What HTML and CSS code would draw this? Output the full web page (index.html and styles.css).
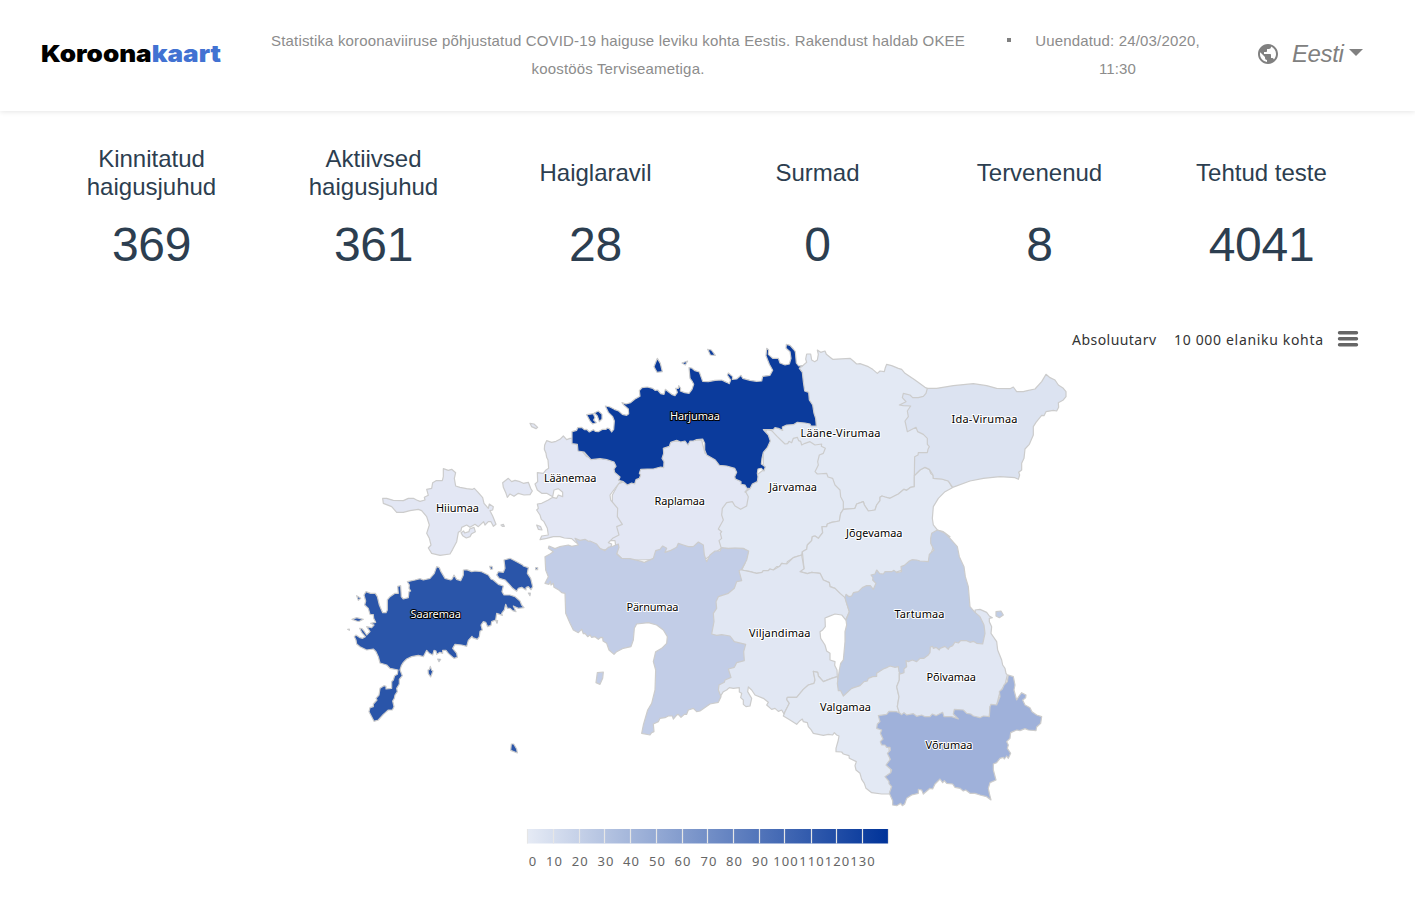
FILE: index.html
```html
<!DOCTYPE html>
<html lang="et">
<head>
<meta charset="utf-8">
<title>Koroonakaart</title>
<link rel="stylesheet" href="styles.css">
</head>
<body>
<header class="header">
  <h1 class="logo"><span class="logo-dark">Koroona</span><span class="logo-blue">kaart</span></h1>
  <p class="intro"><span class="intro-first">Statistika koroonaviiruse põhjustatud COVID-19 haiguse leviku kohta Eestis. Rakendust haldab OKEE</span><br>koostöös Terviseametiga.</p>
  <span class="bullet"></span>
  <p class="updated">Uuendatud: 24/03/2020,<br>11:30</p>
  <div class="language">
    <svg class="globe" viewBox="0 0 24 24"><path d="M12 2C6.48 2 2 6.48 2 12s4.480 10 10 10 10-4.480 10-10S17.520 2 12 2zm-1 17.930c-3.950-.49-7-3.850-7-7.930 0-.62.08-1.210.21-1.790L9 15v1c0 1.100.9 2 2 2v1.930zm6.900-2.540c-.26-.81-1-1.390-1.900-1.390h-1v-3c0-.55-.45-1-1-1H8v-2h2c.55 0 1-.45 1-1V7h2c1.100 0 2-.9 2-2v-.41c2.930 1.190 5 4.060 5 7.410 0 2.080-.8 3.970-2.100 5.390z"/></svg>
    <span class="language-name">Eesti</span>
    <span class="caret"></span>
  </div>
</header>

<section class="stats">
  <div class="stat"><div class="stat-title">Kinnitatud haigusjuhud</div><div class="stat-value">369</div></div>
  <div class="stat"><div class="stat-title">Aktiivsed haigusjuhud</div><div class="stat-value">361</div></div>
  <div class="stat"><div class="stat-title">Haiglaravil</div><div class="stat-value">28</div></div>
  <div class="stat"><div class="stat-title">Surmad</div><div class="stat-value">0</div></div>
  <div class="stat"><div class="stat-title">Tervenenud</div><div class="stat-value">8</div></div>
  <div class="stat"><div class="stat-title">Tehtud teste</div><div class="stat-value">4041</div></div>
</section>

<svg class="chart" viewBox="0 320 1415 581" width="1415" height="581">
  <defs>
    <linearGradient id="scale"><stop offset="0" stop-color="#e6ebf5"/><stop offset="1" stop-color="#003399"/></linearGradient>
  </defs>

  <g class="menu">
    <text x="1072" y="345" textLength="84">Absoluutarv</text>
    <text x="1174" y="345" textLength="149">10 000 elaniku kohta</text>
    <path class="burger" d="M1339.500 332.800H1356.500M1339.500 338.800H1356.500M1339.500 344.800H1356.500"/>
  </g>

  <g class="map">
    <!-- Raplamaa -->
    <g transform="translate(535 470) scale(.33333)">
      <path fill="#e3e7f4" d="M250 42L300 20 360-60 400-85 500-90 510-50 600-5 630 30 640 55 630 66 660 80 660 120 600 140 590 230 559 235 515 265 300 270 260 265 245 250 240 212 222 212 240 190 245 130 232 100 232 75Z"/>
    </g>
    <!-- Läänemaa, Hiiumaa -->
    <g transform="translate(370 410) scale(.33333)" fill="#e3e7f4">
      <path d="M605 85L600 85 590 89 580 78 570 88 558 94 545 97 530 92 524 105 523 118 528 130 530 142 534 150 536 175 528 180 520 190 502 188 503 215 495 222 502 240 515 250 530 250 548 260 552 240 565 236 578 247 578 260 565 255 560 265 548 262 535 270 515 280 502 282 505 295 500 300 510 315 514 328 522 335 532 355 535 375 515 378 510 389 530 385 550 380 570 380 583 384 605 386 615 395 625 402 700 420 722 415 725 402 715 398 728 385 747 375 740 350 757 343 742 320 743 295 722 270 720 255 745 222 780 190 730 150 650 140Z"/>
      <path d="M500 345L512 350 516 360 505 358Z"/>
      <path d="M415 205L425 215 435 211 450 215 460 220 475 217 482 235 487 243 480 254 462 255 445 250 432 259 420 252 412 262 408 250 400 232 398 218Z"/>
      <path d="M480 40L492 42 503 52 498 56 485 50ZM393 345L400 343 403 349 397 349Z"/>
      <path d="M38 265L50 265 70 271 100 272 115 265 130 265 140 270 150 274 165 270 163 262 175 256 170 238 185 235 188 218 198 212 217 212 220 200 220 176 235 181 245 178 257 188 253 205 257 228 270 232 290 236 308 238 313 235 325 248 338 263 342 280 355 295 358 282 370 290 368 300 360 302 368 318 378 343 370 349 363 335 355 335 345 345 341 335 325 350 315 343 300 352 290 345 275 352 273 362 265 367 260 395 248 418 240 432 210 436 185 430 175 414 183 405 178 385 170 370 178 345 170 320 155 302 145 298 120 302 100 307 80 307 65 290 40 280Z"/>
      <path d="M273 368L281 363 284 369 297 365 299 357 312 352 316 365 305 371 300 380 289 384 278 377Z"/>
    </g>
    <!-- Lääne-Virumaa -->
    <g transform="translate(790 335) scale(.33333)">
      <path fill="#e3e9f4" d="M38 92L50 82 47 72 50 57 62 57 65 75 74 80 82 75 85 58 82 45 92 52 105 48 109 58 122 68 128 73 180 70 190 78 200 87 210 86 235 95 248 103 262 115 270 108 283 110 286 98 290 88 305 92 325 100 335 103 345 115 375 135 405 157 412 160 425 175 440 200 440 350 400 390 373 425 373 455 362 457 350 466 342 463 325 477 300 490 285 486 276 483 270 487 270 497 260 510 255 525 235 528 223 510 220 500 200 507 195 520 160 523 130 520 50 450 60 340 0 340-40 330-60 300-75 283-30 240 20 240 20 100Z"/>
    </g>
    <!-- Järvamaa, Jõgevamaa -->
    <g transform="translate(700 420) scale(.33333)" fill="#e3e9f4">
      <path d="M64 385L57 362 65 355 61 340 65 335 55 327 70 300 65 285 67 265 80 248 97 245 105 258 122 268 140 258 145 230 137 215 148 207 150 180 190 150 190 60 200 28 215 32 232 50 255 72 263 71 267 64 275 68 280 55 292 52 296 62 302 64 305 75 315 70 330 65 345 75 365 72 364 79 376 85 370 100 358 105 353 125 355 135 345 155 352 162 380 160 384 171 398 175 405 195 420 210 422 230 430 245 430 268 422 280 418 303 395 307 382 312 380 320 366 320 368 338 355 355 345 348 337 350 335 362 322 375 320 388 307 395 305 405 280 413 262 425 260 432 245 430 239 439 230 440 220 450 210 447 205 452 190 452 186 457 170 460 150 455 125 450 135 430 145 395 130 385Z"/>
      <path d="M757 203L735 215 715 235 700 260 697 295 700 315 712 330 730 335 750 350 700 380 685 425 650 435 550 470 520 520 435 535 420 520 405 505 390 500 388 488 370 480 360 460 335 457 322 461 300 455 302 450 312 446 308 405 307 395 320 388 322 375 335 362 337 350 345 348 355 355 368 338 366 320 380 320 382 312 395 307 418 303 422 280 430 268 465 265 470 252 490 245 493 255 505 273 525 270 530 255 540 242 540 232 546 228 555 231 570 235 595 222 612 208 620 211 632 202 643 200 643 167 660 150 675 142 688 148 692 160 700 167 700 175 725 177 745 183Z"/>
    </g>
    <!-- Ida-Virumaa -->
    <g transform="translate(790 335) scale(.33333)">
      <path fill="#dce3f1" d="M412 160L440 160 490 152 550 146 590 152 620 160 660 161 670 156 680 170 700 170 712 167 735 162 755 140 768 118 780 128 795 135 805 150 820 160 828 170 828 185 820 195 805 203 806 217 800 228 790 226 768 230 762 242 755 241 738 262 730 275 730 300 718 328 705 342 702 370 695 385 695 405 686 412 689 420 685 433 675 428 630 425 580 430 540 438 488 457 475 438 455 432 430 430 429 420 418 403 405 397 390 405 373 422 374 365 384 360 385 353 412 353 414 343 418 335 412 328 412 310 400 298 383 290 378 277 352 290 345 258 355 245 352 228 362 213 340 212 328 210 348 200 337 188 340 175 360 180 368 188 385 188 400 184 408 175Z"/>
    </g>
    <g transform="translate(700 570) scale(.33333)">
      <!-- Viljandimaa -->
      <path fill="#e1e7f3" d="M125 0L150 5 170 10 186 7 190 2 205 2 210-3 220 0 239-11 245-20 260-18 280-37 305-45 312-4 300 5 322 11 335 7 360 10 370 30 388 38 390 50 405 55 420 70 435 83 440 100 448 125 437 150 425 135 405 132 385 140 375 144 376 170 368 180 360 185 362 205 375 225 380 243 390 250 390 270 405 275 404 286 411 300 412 320 395 325 370 335 355 318 353 307 340 304 345 330 342 340 325 345 310 358 290 382 262 382 260 388 268 400 255 425 252 432 245 420 235 424 225 415 215 418 200 405 205 397 190 385 165 375 155 360 145 351 143 365 155 385 150 408 138 410 130 403 130 390 122 383 125 370 118 366 118 353 100 355 88 353 80 360 70 365 62 378 40 340 60 270 90 240 20 200 20 90 90 20 120-20Z"/>
      <!-- Valgamaa -->
      <path fill="#e3e9f4" d="M250 438L255 425 268 400 260 388 262 382 290 382 310 358 325 345 342 340 345 330 340 304 353 307 355 318 370 335 395 325 412 320 418 350 430 370 480 340 530 305 570 280 575 262 610 262 608 300 598 310 598 330 590 350 597 380 592 410 598 425 580 450 560 480 570 560 575 650 568 672 545 672 515 668 498 655 493 640 485 628 480 610 468 600 465 587 469 575 448 565 447 557 430 552 425 546 408 545 408 535 415 510 417 498 410 495 403 488 398 495 385 493 370 496 340 490 333 479 325 470 322 458 310 455 307 447 300 452 290 463 270 450Z"/>
      <!-- Põlvamaa -->
      <path fill="#e1e7f3" d="M825 120L840 118 860 127 868 138 877 143 868 145 868 155 875 170 873 190 890 215 893 240 905 270 908 285 915 295 918 310 922 315 915 345 900 365 890 405 870 410 868 440 800 450 700 450 600 435 592 410 597 380 590 350 598 330 598 310 608 290 620 262 700 220 840 200 830 150Z"/>
      <!-- Tartumaa -->
      <path fill="#c0cde6" d="M712-120L725-115 735-110 750-95 772-70 778-40 792-10 796 20 805 50 810 110 825 127 840 140 852 165 855 190 848 222 830 220 820 214 810 217 800 212 782 212 775 219 765 216 758 227 748 232 745 238 735 229 720 235 718 240 708 232 700 235 698 229 691 231 690 248 685 255 672 265 660 265 650 275 637 270 625 275 618 272 620 290 612 296 612 308 601 312 597 305 595 290 585 292 570 288 562 292 550 297 530 310 530 319 518 320 505 325 502 333 492 335 480 347 455 355 430 378 422 362 415 362 412 340 418 300 422 280 430 270 435 215 435 185 440 165 438 150 448 125 440 100 435 83 438 73 447 80 455 78 460 68 475 65 487 53 500 47 511 47 520 58 528 40 518 30 519 23 513 15 525 12 530 0 539 11 550 12 555 5 575 5 582 1 590 8 605 5 603-10 613-14 628-27 636-31 650-30 660-27 685-25 688-47 702-60 692-80 692-95 695-110Z"/>
      <path fill="#c0cde6" d="M888 125L903 123 910 135 898 143 888 138Z"/>
      <!-- Võrumaa -->
      <path fill="#9fb1da" d="M535 437L560 433 567 424 590 425 600 430 605 434 612 428 620 435 640 431 650 439 665 435 675 440 690 440 697 432 708 437 728 427 732 440 755 440 775 447 760 432 763 418 790 420 800 430 812 432 820 438 840 443 850 438 868 440 870 410 873 403 890 405 900 380 898 365 907 357 912 345 922 335 925 315 940 320 945 345 942 360 950 390 956 380 965 368 978 375 977 383 968 390 975 405 990 413 996 425 1010 435 1025 440 1022 460 1010 471 1008 482 985 480 975 476 960 482 950 480 932 488 930 505 920 515 925 525 922 535 932 550 925 565 920 558 913 567 910 562 900 565 890 578 880 582 880 600 888 630 870 638 865 655 868 670 873 690 860 680 840 675 825 670 810 670 797 660 790 663 780 655 765 652 758 642 740 640 733 632 728 638 720 627 705 642 698 657 690 655 670 672 665 660 655 658 655 670 635 675 620 685 614 702 607 707 602 700 590 707 578 705 578 692 568 670 575 650 567 641 567 634 555 620 572 608 575 600 558 585 571 568 562 550 571 541 570 532 560 532 555 525 545 525 541 515 549 507 541 490 545 480 530 475 532 462 540 455Z"/>
    </g>
    <!-- Pärnumaa -->
    <g transform="translate(535 470) scale(.33333)" fill="#c2cde7">
      <path d="M30 260L45 252 55 245 40 235 42 228 60 236 75 230 100 225 110 229 130 225 125 215 120 205 135 211 150 208 160 214 165 213 185 222 195 235 210 242 220 232 235 228 250 222 252 232 245 252 260 265 285 266 310 272 328 277 355 265 362 242 375 238 383 228 395 235 390 247 405 242 425 232 430 220 445 225 460 230 475 230 490 216 505 225 508 255 515 275 525 255 540 243 555 243 560 233 580 236 600 234 625 236 641 243 635 270 620 298 612 302 620 332 605 335 598 355 580 370 550 380 543 395 545 415 535 430 537 455 530 492 545 496 560 494 585 498 598 515 632 523 626 545 628 572 605 578 598 592 580 597 588 622 570 630 568 637 552 645 550 660 558 680 550 697 525 702 495 723 485 725 475 715 460 720 455 733 448 733 438 742 430 733 425 735 415 747 412 738 400 738 390 743 375 745 370 755 355 762 357 785 350 788 345 795 320 790 325 765 338 720 350 700 360 660 362 600 355 575 362 545 380 535 395 520 397 500 385 480 365 465 340 458 305 462 298 475 295 510 288 530 265 535 245 545 237 553 222 540 215 520 204 513 203 503 197 502 190 508 180 500 170 502 165 495 158 500 150 490 145 491 140 478 130 488 115 480 105 460 92 430 90 370 80 368 70 359 57 352 55 340 48 345 46 334 42 343 30 340 40 320 32 300Z"/>
      <path d="M187 608L205 606 203 625 195 643 183 638Z"/>
    </g>
    <!-- Harjumaa -->
    <g transform="translate(560 335) scale(.33333)" fill="#0b3b9c">
      <path d="M36 290L50 286 53 278 65 277 73 284 80 283 88 291 100 284 106 289 115 290 128 283 138 283 142 279 148 281 155 291 161 283 163 258 158 245 145 232 136 213 150 216 163 223 176 228 187 238 200 241 206 236 205 222 192 211 186 203 198 207 212 203 225 192 240 184 238 167 246 158 262 156 278 160 285 166 293 165 302 176 312 178 316 163 325 170 335 178 345 182 352 172 347 160 355 160 356 152 362 160 361 168 374 173 387 175 396 163 401 148 396 138 390 130 387 98 395 99 405 107 418 111 424 128 428 139 445 140 465 136 485 135 500 142 508 146 512 135 502 120 505 114 518 125 517 133 530 132 543 121 548 130 570 136 590 139 605 138 608 124 630 121 638 106 628 88 618 62 620 40 626 45 625 58 638 70 655 70 660 84 675 90 688 87 693 70 690 50 678 40 679 28 690 31 700 42 706 50 709 84 716 93 728 92 718 100 727 112 730 140 734 168 746 172 748 195 758 210 762 235 767 250 769 273 753 273 750 267 735 264 712 262 700 269 680 270 667 276 668 286 655 280 645 278 640 284 618 284 610 284 625 300 631 318 622 338 610 352 606 370 604 387 616 395 612 408 604 400 594 402 592 415 594 425 592 440 577 447 570 461 560 459 555 450 543 448 543 440 526 432 524 425 530 412 524 400 500 393 478 391 466 375 440 360 434 345 434 325 428 312 410 314 400 318 390 318 384 330 375 318 362 321 350 316 332 322 328 334 310 340 311 355 306 370 312 380 311 398 302 396 280 402 262 402 242 403 238 415 242 420 238 430 228 434 224 447 215 444 202 450 190 440 176 436 180 426 164 412 162 402 168 394 162 381 140 374 120 371 93 374 80 360 72 351 54 348 52 328 36 326Z"/>
      <path d="M292 70L301 85 307 110 291 112 282 95ZM366 84L383 78 376 90ZM443 43L454 45 466 61 451 60ZM80 239L100 236 105 248 101 255 109 263 98 267 90 258ZM103 234L115 228 126 238 126 252 118 260 112 243Z"/>
    </g>
    <!-- Saaremaa -->
    <g transform="translate(340 545) scale(.33333)" fill="#2a55a9">
      <path d="M172 388L174 375 150 370 140 360 120 354 115 335 108 320 100 312 80 315 60 305 50 297 48 285 43 275 48 270 60 278 68 280 76 275 65 262 59 250 66 251 72 258 80 270 90 260 80 245 95 248 102 240 92 235 107 232 101 220 100 209 90 208 85 190 74 180 77 168 72 150 78 140 92 145 106 145 112 155 118 180 128 203 138 203 142 195 142 165 150 155 165 145 175 145 173 124 182 122 184 155 190 162 205 158 207 140 212 138 207 130 208 120 202 110 225 105 240 101 250 105 270 100 283 85 290 65 298 68 303 80 315 100 332 105 337 101 342 90 350 103 362 107 370 90 370 75 380 74 395 80 405 78 425 80 445 90 453 102 460 105 475 118 490 123 486 140 492 150 510 150 525 155 540 168 545 180 552 188 535 190 520 183 528 200 518 197 510 190 502 190 497 178 493 195 485 205 487 211 470 205 467 225 455 230 453 241 443 245 437 232 430 230 423 240 427 255 420 259 418 275 412 283 398 278 396 274 385 286 380 304 365 300 345 298 338 310 350 325 352 337 342 340 325 325 318 316 308 316 308 325 300 322 290 328 288 318 282 316 278 330 268 325 260 316 250 335 235 331 215 335 200 342 190 352 184 362 180 375 187 392 178 403 178 417 170 430 172 440 165 450 163 460 158 468 162 485 157 495 145 495 130 508 115 525 102 529 95 515 87 500 90 488 100 485 100 477 111 465 108 460 117 450 120 430 132 422 138 424 138 432 155 430 155 410 160 405 164 392Z"/>
      <path d="M492 45L510 40 530 50 548 60 550 63 565 68 562 85 572 100 578 125 573 134 565 125 558 128 558 135 545 127 535 130 530 139 518 130 505 115 495 105 478 100 470 90 475 80 490 82 495 70Z"/>
      <path d="M449 64L456 64 458 72 452 73ZM587 68L593 68 593 74 587 74ZM565 144L571 144 570 152ZM467 226L473 227 471 235ZM50 152L62 160 55 166ZM36 223L50 218 70 223 58 229 50 228ZM23 253L28 252 28 256ZM271 364L275 376 279 378 272 396 265 386 264 375 268 374ZM293 342L302 343 297 350ZM514 597L521 597 530 612 532 624 512 616Z"/>
    </g>
  </g>

  <g class="labels">
    <text class="light" x="670" y="420" textLength="50">Harjumaa</text>
    <text x="800.500" y="437" textLength="80">Lääne-Virumaa</text>
    <text x="951.500" y="423" textLength="66">Ida-Virumaa</text>
    <text x="544" y="482" textLength="52.500">Läänemaa</text>
    <text x="436" y="512" textLength="43">Hiiumaa</text>
    <text x="654.500" y="505" textLength="50.500">Raplamaa</text>
    <text x="769" y="491" textLength="48">Järvamaa</text>
    <text x="846" y="537" textLength="56.500">Jõgevamaa</text>
    <text class="light" x="410.500" y="618" textLength="50.500">Saaremaa</text>
    <text x="626.500" y="611" textLength="52">Pärnumaa</text>
    <text x="749" y="637" textLength="61.500">Viljandimaa</text>
    <text x="894.500" y="618" textLength="50">Tartumaa</text>
    <text x="926.500" y="681" textLength="49.500">Põlvamaa</text>
    <text x="820" y="711" textLength="51">Valgamaa</text>
    <text x="925.500" y="749" textLength="47">Võrumaa</text>
  </g>

  <g class="legend">
    <rect x="527" y="829" width="361" height="14.500" fill="url(#scale)"/>
    <path class="ticks" d="M527.500 829v14.500M553.500 829v14.500M579.500 829v14.500M604.500 829v14.500M630.500 829v14.500M656.500 829v14.500M682.500 829v14.500M707.500 829v14.500M733.500 829v14.500M759.500 829v14.500M784.500 829v14.500M811.500 829v14.500M836.500 829v14.500M862.500 829v14.500M888.500 829v14.500"/>
    <g class="numbers">
      <text x="533" y="866">0</text><text x="554.500" y="866">10</text><text x="580.200" y="866">20</text><text x="606" y="866">30</text><text x="631.500" y="866">40</text><text x="657.500" y="866">50</text><text x="683" y="866">60</text><text x="709" y="866">70</text><text x="734.500" y="866">80</text><text x="760.500" y="866">90</text><text x="786" y="866">100</text><text x="812" y="866">110</text><text x="837.500" y="866">120</text><text x="863" y="866">130</text>
    </g>
  </g>
</svg>
</body>
</html>
```

FILE: styles.css
```css
* { box-sizing: border-box; }
body {
  margin: 0;
  width: 1415px;
  height: 901px;
  overflow: hidden;
  background: #fff;
  color: #2c3e50;
  font-family: "Liberation Sans", Arial, sans-serif;
}
.header {
  display: grid;
  grid-template-columns: 230px 776px 6px 211px 192px;
  height: 111px;
  padding-top: 27px;
  box-shadow: 0 1px 5px rgba(0, 0, 0, .1);
  color: #8c8c8c;
}
.logo {
  margin: 12px 0 0 41px;
  font: 900 23.5px/30px Inter, sans-serif;
  white-space: nowrap;
  transform: scaleX(1.11);
  transform-origin: left;
}
.logo-dark { color: #000; }
.logo-blue { color: #4272d2; }
.intro, .updated {
  margin: 0;
  font-size: 15px;
  line-height: 28px;
  letter-spacing: .165px;
  text-align: center;
  white-space: nowrap;
}
.bullet {
  width: 4px;
  height: 4px;
  margin: 11px 0 0 1px;
  background: #808080;
}
.language {
  display: flex;
  align-items: center;
  height: 53px;
  padding-left: 33px;
  color: #808080;
}
.globe { width: 24px; height: 24px; fill: #808080; }
.language-name { margin-left: 12px; font-size: 24px; font-style: italic; letter-spacing: -.4px; }
.caret {
  margin: -2px 0 0 6px;
  border: 7px solid transparent;
  border-top-color: #808080;
  border-bottom: 0;
}
.stats {
  display: grid;
  grid-template-columns: repeat(6, 222px);
  height: 209px;
  padding: 34px 0 0 40.500px;
  text-align: center;
}
.stat-title {
  display: flex;
  align-items: center;
  justify-content: center;
  height: 56px;
  padding: 0 40px;
  font-size: 24px;
  line-height: 28px;
}
.stat-value { margin-top: 16px; font-size: 48px; line-height: 56px; letter-spacing: -.3px; }
.chart { display: block; font-family: "Noto Sans", sans-serif; }
.menu text { font-size: 14px; fill: #333; }
.burger { fill: none; stroke: #666; stroke-width: 3.4px; stroke-linecap: round; }
.map path {
  stroke: #ccc;
  stroke-width: 1.2px;
  stroke-linejoin: round;
  vector-effect: non-scaling-stroke;
}
.labels text {
  font-size: 11px;
  fill: #000;
  stroke: #fff;
  stroke-width: 2px;
  stroke-linejoin: round;
  paint-order: stroke;
}
.labels .light { fill: #fff; stroke: #000; }
.ticks { stroke: #e6e6e6; stroke-width: 1.2px; }
.numbers text { font-size: 13px; fill: #666; letter-spacing: 1px; text-anchor: middle; }
```
